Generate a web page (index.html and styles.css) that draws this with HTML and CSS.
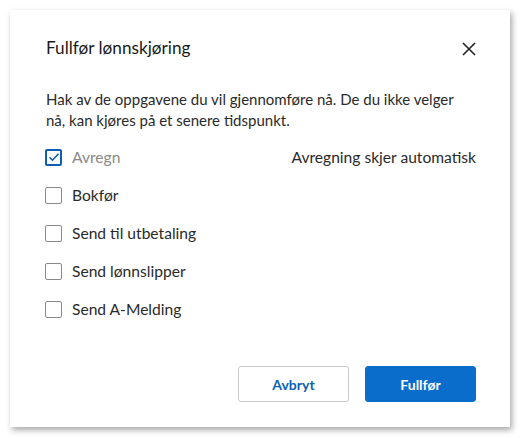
FILE: index.html
```html
<!DOCTYPE html>
<html>
<head>
<meta charset="utf-8">
<link rel="stylesheet" href="styles.css">
</head>
<body>
<div class="dialog">
  <div class="header">
    <h1 class="title">Fullfør lønnskjøring</h1>
    <button class="close" aria-label="Lukk">
      <svg width="14" height="14" viewBox="0 0 14 14"><path d="M1 1L13 13M13 1L1 13" stroke="#222" stroke-width="1.6" fill="none"/></svg>
    </button>
  </div>
  <p class="intro">Hak av de oppgavene du vil gjennomføre nå. De du ikke velger nå, kan kjøres på et senere tidspunkt.</p>
  <ul class="tasks">
    <li class="task">
      <span class="box checked"><svg width="12" height="10" viewBox="0 0 12 10"><path d="M1.5 5.2L4.5 8.2L10.5 1.8" stroke="#0a5fb4" stroke-width="1.6" fill="none"/></svg></span>
      <span class="label disabled">Avregn</span>
      <span class="note">Avregning skjer automatisk</span>
    </li>
    <li class="task"><span class="box"></span><span class="label">Bokfør</span></li>
    <li class="task"><span class="box"></span><span class="label">Send til utbetaling</span></li>
    <li class="task"><span class="box"></span><span class="label">Send lønnslipper</span></li>
    <li class="task"><span class="box"></span><span class="label">Send A-Melding</span></li>
  </ul>
  <div class="actions">
    <button class="btn secondary">Avbryt</button>
    <button class="btn primary">Fullfør</button>
  </div>
</div>
</body>
</html>
```
FILE: styles.css
```css
* { box-sizing: border-box; }
html, body { margin: 0; padding: 0; background: #fff; }
body { padding: 10px; font-family: Lato, "Open Sans", sans-serif; color: #222; }
.dialog {
  width: 500px;
  height: 417px;
  background: #fff;
  box-shadow: 2px 3px 6px rgba(0,0,0,0.35);
  padding: 26px 34px 25px 36px;
  display: flex;
  flex-direction: column;
}
.header { display: flex; justify-content: space-between; align-items: center; }
.title { margin: 0; font-size: 17.2px; font-weight: 400; line-height: 24px; color: #1a1a1a; }
.close { border: 0; background: none; padding: 0; width: 14px; height: 14px; display: flex; cursor: pointer; margin-top: 2px; }
.intro { margin: 29px 0 0; font-size: 15px; line-height: 21px; color: #2a2a2a; }
.tasks { list-style: none; margin: 15px 0 0; padding: 0; display: flex; flex-direction: column; gap: 16px; }
.task { display: flex; align-items: center; height: 22px; font-size: 15.6px; }
.box {
  width: 17px; height: 17px;
  border: 1px solid #8a8a8a;
  border-radius: 2px;
  display: flex; align-items: center; justify-content: center;
  margin-left: -1px;
  margin-right: 10px;
  flex: none;
}
.box.checked { border: 2px solid #0a5fb4; }
.label { color: #2a2a2a; }
.label.disabled { color: #8a8a8a; }
.note { margin-left: auto; color: #2a2a2a; }
.actions { margin-top: auto; display: flex; justify-content: flex-end; gap: 16px; }
.btn {
  width: 111px; height: 36px;
  border-radius: 3px;
  font-family: Lato, sans-serif;
  font-size: 14px; font-weight: 700;
  cursor: pointer;
}
.secondary { background: #fff; border: 1px solid #c8c8c8; color: #0a5fb4; }
.primary { background: #0a6ccb; border: 1px solid #0a6ccb; color: #fff; }
```
